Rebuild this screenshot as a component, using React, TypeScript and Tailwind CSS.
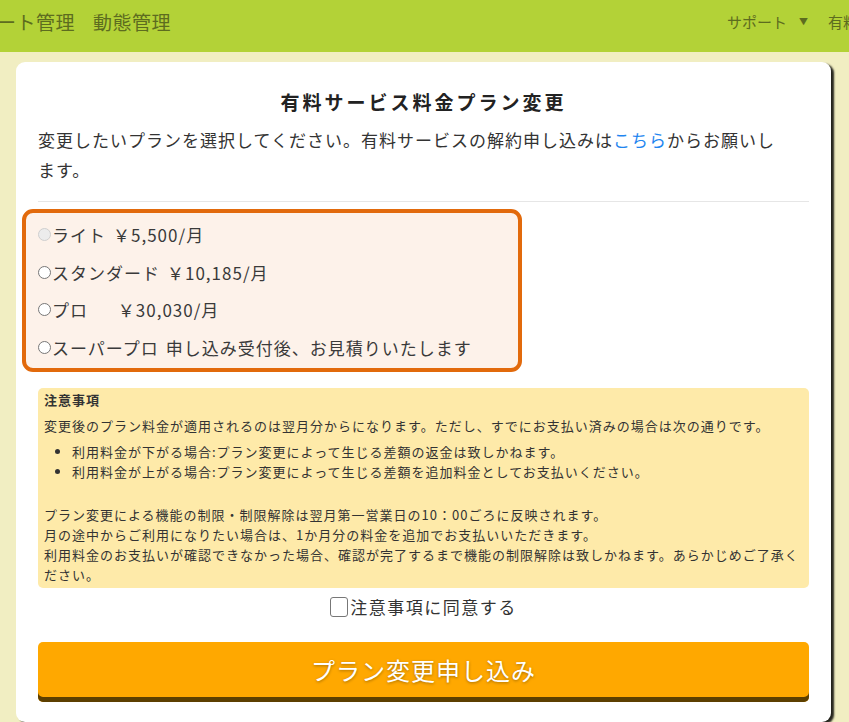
import { useState } from "react";

const plans = [
  { label: "ライト", price: "￥5,500/月", disabled: true },
  { label: "スタンダード", price: "￥10,185/月" },
  { label: "プロ", price: "\u3000\u00a0￥30,030/月" },
  { label: "スーパープロ", price: "申し込み受付後、お見積りいたします" },
];

export default function App() {
  const [plan, setPlan] = useState<string | null>(null);
  const [agree, setAgree] = useState(false);

  return (
    <div
      className="min-h-[722px] bg-[#f1eec2] text-[#333]"
      style={{ fontFamily: '"Noto Sans CJK JP", "Noto Sans", sans-serif' }}
    >
      {/* Header */}
      <header className="h-[52px] bg-[#b3d237] flex items-start justify-between pt-[9px] text-[#5d6c1f] overflow-hidden whitespace-nowrap">
        <nav className="flex items-center gap-[18px] text-[19px] leading-[26px] tracking-[0.5px] -ml-[3px]">
          <span>ート管理</span>
          <span>動態管理</span>
        </nav>
        <div className="flex items-center gap-[20px] text-[15px] leading-[26px] -mr-[9px]">
          <span className="flex items-center gap-[12px]">
            サポート
            <span className="text-[9px]">▼</span>
          </span>
          <span>有料</span>
        </div>
      </header>

      {/* Card */}
      <div className="ml-[16px] mr-[18px] mt-[10px] bg-white rounded-[9px] shadow-[3px_2px_2px_rgba(0,0,0,0.85)] px-[22px] pt-[24px] pb-[20px]">
        <h1 className="text-center font-bold text-[19px] tracking-[3px] leading-[32px] text-[#222]">
          有料サービス料金プラン変更
        </h1>
        <p className="mt-[7px] mr-[20px] text-[17px] tracking-[1px] leading-[30px] text-[#333]">
          変更したいプランを選択してください。有料サービスの解約申し込みは
          <a href="#" className="text-[#1f86f0]">こちら</a>
          からお願いします。
        </p>
        <hr className="mt-[16px] border-[#e6e6e6]" />

        <div className="mt-[7px] -ml-[16px] w-[500px] border-[4px] border-[#e26a0c] rounded-[11px] bg-[#fdf2ea] pl-[12px] pt-[3px] pb-[2px]">
          {plans.map((p) => (
            <label
              key={p.label}
              className="flex items-center h-[37.5px] text-[17px] tracking-[1px] text-[#3a3a3a] cursor-pointer"
            >
              <input
                type="radio"
                name="plan"
                disabled={p.disabled}
                checked={plan === p.label}
                onChange={() => setPlan(p.label)}
                className={`appearance-none w-[13px] h-[13px] rounded-full border mr-[1px] ${
                  p.disabled ? "border-[#cfcfcf] bg-[#ececec]" : "border-[#777] bg-white checked:bg-[#1f86f0]"
                }`}
              />
              <span>{p.label}</span>
              <span className="ml-[7px]">{p.price}</span>
            </label>
          ))}
        </div>

        <div className="mt-[16px] bg-[#feeaa9] rounded-[5px] px-[6px] pt-[2px] pb-[3px] text-[13px] tracking-[1px] leading-[20px] text-[#333]">
          <p className="font-bold">注意事項</p>
          <p className="mt-[6px]">
            変更後のプラン料金が適用されるのは翌月分からになります。ただし、すでにお支払い済みの場合は次の通りです。
          </p>
          <ul className="list-disc pl-[28px] mt-[6px]">
            <li>利用料金が下がる場合:プラン変更によって生じる差額の返金は致しかねます。</li>
            <li>利用料金が上がる場合:プラン変更によって生じる差額を追加料金としてお支払いください。</li>
          </ul>
          <p className="mt-[23px]">
            プラン変更による機能の制限・制限解除は翌月第一営業日の10：00ごろに反映されます。
            <br />
            月の途中からご利用になりたい場合は、1か月分の料金を追加でお支払いいただきます。
            <br />
            利用料金のお支払いが確認できなかった場合、確認が完了するまで機能の制限解除は致しかねます。あらかじめご了承ください。
          </p>
        </div>

        <label className="mt-[8px] flex items-center justify-center text-[17px] tracking-[1.5px] leading-[22px] text-[#333] cursor-pointer">
          <input
            type="checkbox"
            checked={agree}
            onChange={(e) => setAgree(e.target.checked)}
            className="appearance-none w-[18px] h-[20px] rounded-[3px] border border-[#777] bg-white mr-[2px] checked:bg-[#1f86f0]"
          />
          注意事項に同意する
        </label>

        <button className="mt-[24px] w-full h-[60px] rounded-[5px] bg-[#ffa800] shadow-[inset_0_-5px_0_#5c3f00] text-white text-[24px] tracking-[1px] pb-[4px] [text-shadow:0_1px_3px_rgba(0,0,0,0.35)]">
          プラン変更申し込み
        </button>
      </div>
    </div>
  );
}
